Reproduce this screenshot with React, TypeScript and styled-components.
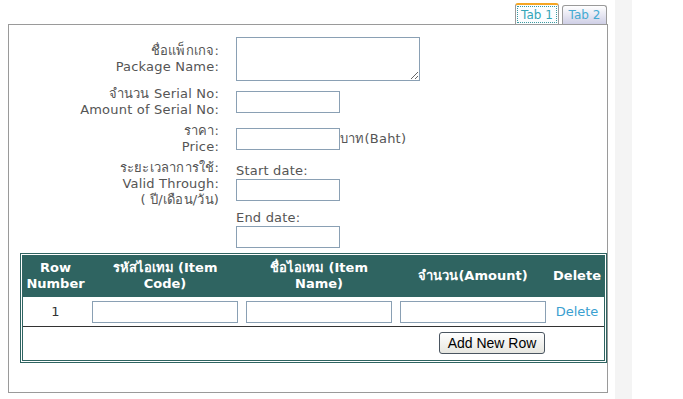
import React from "react";
import styled, { createGlobalStyle } from "styled-components";

const GlobalStyle = createGlobalStyle`
  html, body {
    margin: 0;
    padding: 0;
    background: #fff;
  }
  body {
    font-family: "DejaVu Sans", Verdana, sans-serif;
    font-size: 13px;
    color: #555;
  }
`;

const Page = styled.div`
  display: flex;
  align-items: flex-start;
  height: 399px;
  overflow: hidden;
`;

const Main = styled.div`
  margin-left: 8px;
  padding-top: 3px;
  width: 600px;
`;

const Strip = styled.div`
  margin-left: 7px;
  width: 17px;
  height: 399px;
  background: #f4f4f4;
`;

const TabBar = styled.div`
  display: flex;
  justify-content: flex-end;
  align-items: flex-end;
  gap: 3px;
  height: 21px;
  padding-right: 1px;
`;

const Tab = styled.div<{ $active?: boolean }>`
  box-sizing: border-box;
  height: ${(p) => (p.$active ? "21px" : "19px")};
  width: ${(p) => (p.$active ? "44px" : "45px")};
  border: 1px solid #9a9a9a;
  border-bottom: none;
  border-top: ${(p) => (p.$active ? "2px solid #f5a623" : "1px solid #9a9a9a")};
  border-radius: 3px 3px 0 0;
  background: ${(p) =>
    p.$active ? "#fbfdff" : "linear-gradient(#ffffff, #cfcfe6)"};
  color: ${(p) => (p.$active ? "#33a6b8" : "#45aad2")};
  font-size: 12px;
  display: flex;
  align-items: center;
  justify-content: center;
  padding: 1px;
`;

const TabFocus = styled.span`
  display: flex;
  align-items: center;
  justify-content: center;
  width: 100%;
  height: 100%;
  box-sizing: border-box;
  border: 1px dotted #3a9aa0;
`;

const Panel = styled.div`
  box-sizing: border-box;
  height: 369px;
  border: 1px solid #9a9a9a;
  padding-top: 12px;
`;

const FormRow = styled.div<{ $top?: boolean }>`
  display: grid;
  grid-template-columns: 210px 1fr;
  column-gap: 17px;
  align-items: ${(p) => (p.$top ? "start" : "center")};
  margin-bottom: 5px;
`;

const Label = styled.div`
  text-align: right;
  line-height: 16px;
  color: #555;
  letter-spacing: 0.2px;
`;

const Field = styled.div<{ $pad?: number }>`
  display: flex;
  flex-direction: column;
  align-items: flex-start;
  padding-top: ${(p) => p.$pad ?? 0}px;
`;

const Inline = styled.div`
  display: flex;
  align-items: center;
`;

const TextArea = styled.textarea`
  box-sizing: border-box;
  width: 184px;
  height: 44px;
  border: 1px solid #8aa0b4;
  margin: 0;
  padding: 2px;
  font-family: inherit;
  display: block;
`;

const Input = styled.input<{ $w?: number }>`
  box-sizing: border-box;
  width: ${(p) => p.$w ?? 104}px;
  height: 22px;
  border: 1px solid #8aa0b4;
  margin: 0;
  padding: 1px 3px;
  font-family: inherit;
  display: block;
`;

const Hint = styled.span<{ $gap?: number }>`
  line-height: 16px;
  color: #555;
  letter-spacing: 0.2px;
  margin-top: ${(p) => p.$gap ?? 0}px;
`;

const TableFrame = styled.div`
  box-sizing: border-box;
  width: 587px;
  margin: 4px 0 0 11px;
  border: 1px solid #2f6461;
  padding: 1px;
`;

const Table = styled.table`
  width: 100%;
  border: 1px solid #2f6461;
  border-collapse: separate;
  border-spacing: 0;
  table-layout: fixed;
`;

const HeadCell = styled.th<{ $w: number }>`
  width: ${(p) => p.$w}px;
  background: #2f6461;
  color: #fff;
  font-weight: bold;
  font-size: 13px;
  line-height: 16px;
  padding: 4px 0 5px;
  text-align: center;
`;

const Cell = styled.td<{ $center?: boolean }>`
  padding: 4px 4px 3px;
  border-bottom: 1px solid #333;
  text-align: ${(p) => (p.$center ? "center" : "left")};
  color: #333;
  line-height: 22px;
`;

const FootCell = styled.td`
  padding: 5px 5px 6px 0;
  text-align: right;
`;

const DeleteLink = styled.a`
  color: #3aa0d0;
  text-decoration: none;
  font-size: 13px;
`;

const Button = styled.button`
  box-sizing: border-box;
  width: 106px;
  height: 22px;
  border: 1px solid #4a5560;
  border-radius: 3px;
  background: linear-gradient(#ffffff, #e6e6e0);
  font-family: "Liberation Sans", Arial, sans-serif;
  font-size: 14px;
  color: #000;
  padding: 0;
`;

export default function App() {
  return (
    <>
      <GlobalStyle />
      <Page>
        <Main>
          <TabBar>
            <Tab $active>
              <TabFocus>Tab 1</TabFocus>
            </Tab>
            <Tab>Tab 2</Tab>
          </TabBar>
          <Panel>
            <FormRow>
              <Label>
                ชื่อแพ็กเกจ:
                <br />
                Package Name:
              </Label>
              <Field>
                <TextArea />
              </Field>
            </FormRow>
            <FormRow>
              <Label>
                จำนวน Serial No:
                <br />
                Amount of Serial No:
              </Label>
              <Field>
                <Input />
              </Field>
            </FormRow>
            <FormRow>
              <Label>
                ราคา:
                <br />
                Price:
              </Label>
              <Field>
                <Inline>
                  <Input />
                  <Hint>บาท(Baht)</Hint>
                </Inline>
              </Field>
            </FormRow>
            <FormRow $top>
              <Label>
                ระยะเวลาการใช้:
                <br />
                Valid Through:
                <br />( ปี/เดือน/วัน)
              </Label>
              <Field $pad={3}>
                <Hint>Start date:</Hint>
                <Input />
                <Hint $gap={9}>End date:</Hint>
                <Input />
              </Field>
            </FormRow>
            <TableFrame>
              <Table>
                <thead>
                  <tr>
                    <HeadCell $w={65}>
                      Row
                      <br />
                      Number
                    </HeadCell>
                    <HeadCell $w={154}>
                      รหัสไอเทม (Item
                      <br />
                      Code)
                    </HeadCell>
                    <HeadCell $w={154}>
                      ชื่อไอเทม (Item
                      <br />
                      Name)
                    </HeadCell>
                    <HeadCell $w={154}>จำนวน(Amount)</HeadCell>
                    <HeadCell $w={54}>Delete</HeadCell>
                  </tr>
                </thead>
                <tbody>
                  <tr>
                    <Cell $center>1</Cell>
                    <Cell>
                      <Input $w={146} />
                    </Cell>
                    <Cell>
                      <Input $w={146} />
                    </Cell>
                    <Cell>
                      <Input $w={146} />
                    </Cell>
                    <Cell $center>
                      <DeleteLink href="#">Delete</DeleteLink>
                    </Cell>
                  </tr>
                  <tr>
                    <FootCell colSpan={4}>
                      <Button>Add New Row</Button>
                    </FootCell>
                    <FootCell />
                  </tr>
                </tbody>
              </Table>
            </TableFrame>
          </Panel>
        </Main>
        <Strip />
      </Page>
    </>
  );
}
